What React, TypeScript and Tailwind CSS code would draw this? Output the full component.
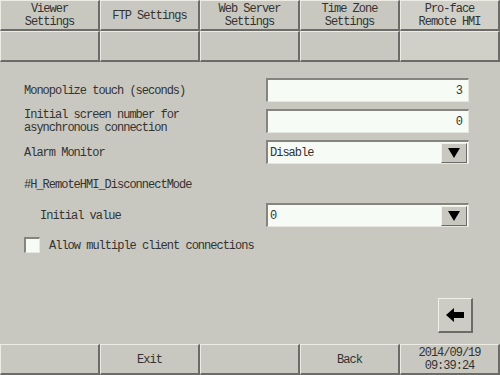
const font = { fontFamily: '"Liberation Mono", "DejaVu Sans Mono", monospace' }

function Cell({ lines, active = false }: { lines?: string[]; active?: boolean }) {
  return (
    <div
      className={`flex h-[31px] flex-col items-center justify-center border-t border-l border-b-2 border-r-2 border-t-[#ecebe4] border-l-[#ecebe4] border-b-[#6c6b67] border-r-[#6c6b67] pt-[2px] text-[12px] leading-[13px] tracking-[-1px] text-[#333] ${active ? 'bg-[#d0cfc8]' : 'bg-[#c9c8c0]'}`}
    >
      {lines?.map((l) => (
        <span key={l} className="whitespace-pre">{l}</span>
      ))}
    </div>
  )
}

function Field({ value }: { value: string }) {
  return (
    <div className="flex h-[24px] w-[203px] items-center justify-end border border-t-2 border-l-2 border-t-[#85847f] border-l-[#85847f] border-b-[#e6e5de] border-r-[#e6e5de] bg-[#f7fbf6] pt-[1px] pr-[6px]">
      {value}
    </div>
  )
}

function Select({ value }: { value: string }) {
  return (
    <div className="flex h-[24px] w-[203px] items-center border border-t-2 border-l-2 border-t-[#85847f] border-l-[#85847f] border-b-[#e6e5de] border-r-[#e6e5de] bg-[#f7fbf6] pl-[2px]">
      <span className="flex-1 pt-[1px]">{value}</span>
      <div className="mr-[1px] flex h-[20px] w-[26px] items-center justify-center border border-t-[#f0efe8] border-l-[#f0efe8] border-b-[#6c6b67] border-r-[#6c6b67] bg-[#c9c8c0]">
        <svg width="12" height="10" viewBox="0 0 12 10">
          <polygon points="0,0 12,0 6,10" fill="#000" />
        </svg>
      </div>
    </div>
  )
}

export default function App() {
  return (
    <div className="flex h-[375px] w-[500px] flex-col bg-[#c9c8c0] text-[#333]" style={font}>
      <div className="grid grid-cols-5">
        <Cell lines={['Viewer', 'Settings']} />
        <Cell lines={['FTP Settings']} />
        <Cell lines={['Web Server', 'Settings']} />
        <Cell lines={['Time Zone', 'Settings']} />
        <Cell lines={['Pro-face', 'Remote HMI']} active />
        <Cell />
        <Cell />
        <Cell />
        <Cell />
        <Cell active />
      </div>

      <div className="flex flex-1 flex-col pl-[24px] text-[12px] tracking-[-1px]">
        <div className="mt-[16px] flex h-[24px] items-center">
          <span className="w-[242px] pt-[1px]">Monopolize touch (seconds)</span>
          <Field value="3" />
        </div>
        <div className="mt-[7px] flex h-[24px] items-center">
          <span className="w-[242px] pt-[1px] leading-[13px]">
            Initial screen number for
            <br />
            asynchronous connection
          </span>
          <Field value="0" />
        </div>
        <div className="mt-[7px] flex h-[24px] items-center">
          <span className="w-[242px] pt-[1px]">Alarm Monitor</span>
          <Select value="Disable" />
        </div>
        <div className="mt-[12px] flex h-[16px] items-center pt-[1px]">#H_RemoteHMI_DisconnectMode</div>
        <div className="mt-[11px] flex h-[24px] items-center">
          <span className="w-[242px] pt-[1px] pl-[16px]">Initial value</span>
          <Select value="0" />
        </div>
        <div className="mt-[10px] flex h-[16px] items-center">
          <div className="h-[16px] w-[16px] border border-t-2 border-l-2 border-t-[#85847f] border-l-[#85847f] border-b-[#e6e5de] border-r-[#e6e5de] bg-[#f7fbf6]" />
          <span className="ml-[9px] pt-[1px]">Allow multiple client connections</span>
        </div>
        <div className="mt-auto mb-[11px] mr-[27px] flex h-[35px] w-[35px] items-center justify-center self-end border border-t-[#f0efe8] border-l-[#f0efe8] border-b-2 border-r-2 border-b-[#6c6b67] border-r-[#6c6b67] bg-[#cccbc4]">
          <svg width="18" height="14" viewBox="0 0 18 14">
            <polygon points="0,7 8,0 8,4 18,4 18,10 8,10 8,14" fill="#000" />
          </svg>
        </div>
      </div>

      <div className="grid grid-cols-5">
        <Cell />
        <Cell lines={['Exit']} />
        <Cell />
        <Cell lines={['Back']} />
        <Cell lines={['2014/09/19', '09:39:24']} />
      </div>
    </div>
  )
}
